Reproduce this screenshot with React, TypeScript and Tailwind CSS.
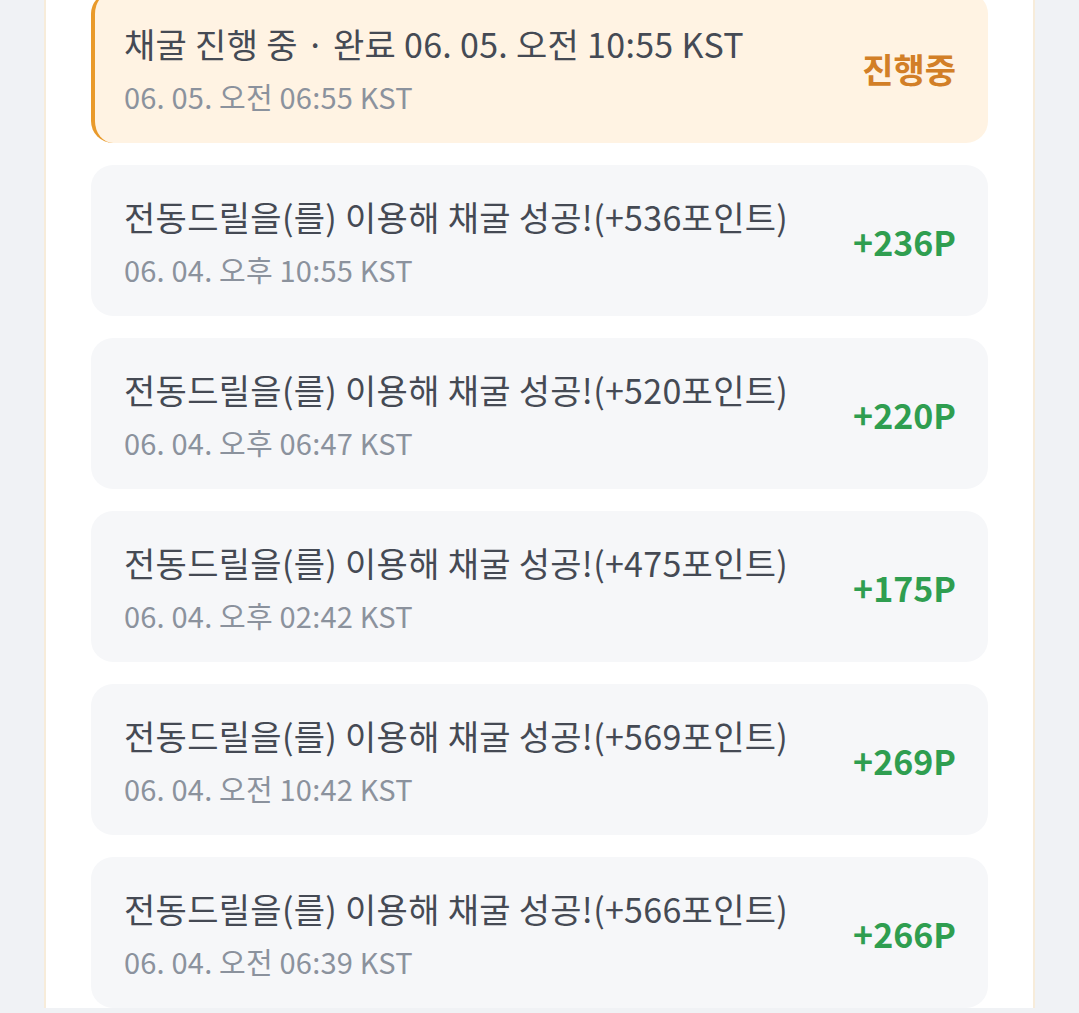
import React from 'react';

type Item = {
  title: string;
  date: string;
  amount: string;
  active?: boolean;
};

const ITEMS: Item[] = [
  { title: '채굴 진행 중 · 완료 06. 05. 오전 10:55 KST', date: '06. 05. 오전 06:55 KST', amount: '진행중', active: true },
  { title: '전동드릴을(를) 이용해 채굴 성공!(+536포인트)', date: '06. 04. 오후 10:55 KST', amount: '+236P' },
  { title: '전동드릴을(를) 이용해 채굴 성공!(+520포인트)', date: '06. 04. 오후 06:47 KST', amount: '+220P' },
  { title: '전동드릴을(를) 이용해 채굴 성공!(+475포인트)', date: '06. 04. 오후 02:42 KST', amount: '+175P' },
  { title: '전동드릴을(를) 이용해 채굴 성공!(+569포인트)', date: '06. 04. 오전 10:42 KST', amount: '+269P' },
  { title: '전동드릴을(를) 이용해 채굴 성공!(+566포인트)', date: '06. 04. 오전 06:39 KST', amount: '+266P' },
];

const App: React.FC = () => {
  return (
    <div
      className="min-h-[1013px] bg-[#f0f2f5] px-[44px] overflow-hidden"
      style={{ fontFamily: '"Noto Sans CJK KR", "Noto Sans", sans-serif' }}
    >
      <div className="min-h-[1013px] bg-white border-x-2 border-[#f7ecda] px-[45px]">
        <div className="flex flex-col gap-[22px] -mt-[8px]">
          {ITEMS.map((item, i) => (
            <div
              key={i}
              className={`h-[151px] rounded-[22px] flex items-center justify-between pr-[32px] ${
                item.active
                  ? 'bg-[#fff3e3] border-l-4 border-[#e99a2b] pl-[29px]'
                  : 'bg-[#f6f7f9] pl-[33px]'
              }`}
            >
              <div className="flex flex-col">
                <p className="text-[34px] leading-[48px] tracking-[0.3px] text-[#454a54] whitespace-nowrap">
                  {item.title}
                </p>
                <p className="text-[29px] leading-[40px] tracking-[0.2px] text-[#8b929d] mt-[8px] whitespace-nowrap">
                  {item.date}
                </p>
              </div>
              <span
                className={`text-[34px] font-bold pt-[2px] ${
                  item.active ? 'text-[#d27f27]' : 'text-[#2f9e50]'
                }`}
              >
                {item.amount}
              </span>
            </div>
          ))}
        </div>
      </div>
    </div>
  );
};

export default App;
